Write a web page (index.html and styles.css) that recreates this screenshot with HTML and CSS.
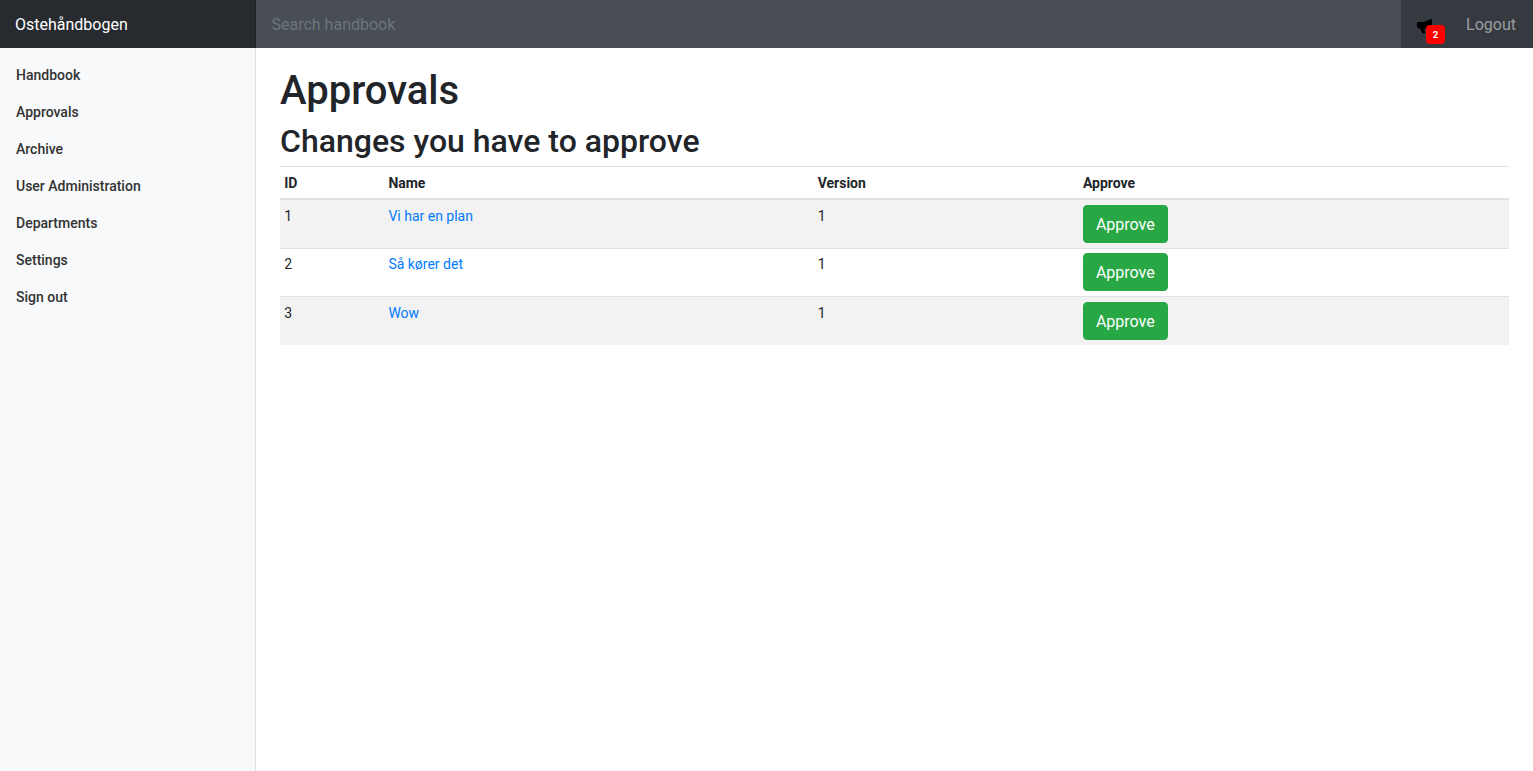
FILE: index.html
```html
<!DOCTYPE html>
<html lang="en">
<head>
<meta charset="utf-8">
<title>Approvals</title>
<link rel="stylesheet" href="styles.css">
</head>
<body>
<header class="navbar">
  <a class="brand" href="#">Ostehåndbogen</a>
  <input class="search" type="text" placeholder="Search handbook">
  <div class="nav-right">
    <span class="bell">
      <svg class="horn" viewBox="0 0 16 16" width="16" height="16" aria-hidden="true"><path d="M0 4.500h1v-.500h6L14 1h1v13L7 10.500l1.500 4.500-3 .5L3 10.500H1v-1H0z" fill="#000"/></svg>
      <span class="badge">2</span>
    </span>
    <a class="logout" href="#">Logout</a>
  </div>
</header>
<div class="shell">
  <nav class="sidebar">
    <a href="#">Handbook</a>
    <a href="#">Approvals</a>
    <a href="#">Archive</a>
    <a href="#">User Administration</a>
    <a href="#">Departments</a>
    <a href="#">Settings</a>
    <a href="#">Sign out</a>
  </nav>
  <main class="main">
    <h1>Approvals</h1>
    <h2>Changes you have to approve</h2>
    <table class="table">
      <colgroup><col class="c1"><col class="c2"><col class="c3"><col></colgroup>
      <thead>
        <tr><th>ID</th><th>Name</th><th>Version</th><th>Approve</th></tr>
      </thead>
      <tbody>
        <tr><td>1</td><td><a href="#">Vi har en plan</a></td><td>1</td><td class="action"><button class="btn">Approve</button></td></tr>
        <tr><td>2</td><td><a href="#">Så kører det</a></td><td>1</td><td class="action"><button class="btn">Approve</button></td></tr>
        <tr><td>3</td><td><a href="#">Wow</a></td><td>1</td><td class="action"><button class="btn">Approve</button></td></tr>
      </tbody>
    </table>
  </main>
</div>
</body>
</html>
```
FILE: styles.css
```css
* { box-sizing: border-box; }
html, body { height: 100%; }
body {
  margin: 0;
  font-family: Roboto, "Liberation Sans", sans-serif;
  font-size: 16px;
  line-height: 1.5;
  color: #212529;
  background: #fff;
  display: flex;
  flex-direction: column;
  overflow: hidden;
}
a { text-decoration: none; }
.navbar {
  display: flex;
  align-items: stretch;
  height: 48px;
  flex: none;
  background: #343a40;
}
.brand {
  width: 256px;
  flex: none;
  padding: 13px 16px 11px 15px;
  color: #fff;
  background: rgba(0, 0, 0, 0.25);
  box-shadow: inset -1px 0 0 rgba(0, 0, 0, 0.25);
}
.search {
  flex: 1;
  min-width: 0;
  border: 0;
  outline: 0;
  padding: 8px 16px 6px 15.500px;
  font: inherit;
  color: #495057;
  background: rgba(255, 255, 255, 0.1);
}
.search::placeholder { color: #6c757d; opacity: 1; }
.nav-right {
  display: flex;
  align-items: center;
  flex: none;
  width: 132px;
  padding-left: 16px;
}
.bell {
  position: relative;
  display: block;
  width: 16px;
  height: 16px;
  margin-top: 4px;
}
.horn { display: block; }
.badge {
  position: absolute;
  left: 9px;
  top: 7px;
  width: 19px;
  height: 19px;
  border-radius: 4px;
  background: #f00;
  color: #fff;
  font-size: 9.600px;
  font-weight: 700;
  line-height: 19px;
  text-align: center;
}
.logout {
  margin-left: auto;
  padding: 2px 17px 0 0;
  color: rgba(255, 255, 255, 0.5);
}
.shell {
  flex: 1;
  display: flex;
  min-height: 0;
}
.sidebar {
  width: 256px;
  flex: none;
  display: flex;
  flex-direction: column;
  padding-top: 8px;
  background: #f8f9fa;
  box-shadow: inset -1px 0 0 rgba(0, 0, 0, 0.1);
}
.sidebar a {
  padding: 9px 16px 7px;
  font-size: 14px;
  font-weight: 500;
  color: #333;
}
.main {
  flex: 1;
  min-width: 0;
  padding: 19px 24px 0;
}
h1, h2 {
  margin: 0;
  font-weight: 500;
  line-height: 1.2;
}
h1 { font-size: 40px; margin-bottom: 7px; }
h2 { font-size: 32px; margin-bottom: 6px; }
.table {
  width: 100%;
  border-collapse: collapse;
  font-size: 14px;
}
.table th, .table td {
  padding: 5.800px 4.800px 3.800px 4.200px;
  text-align: left;
  vertical-align: top;
  border-top: 1px solid #dee2e6;
}
.table thead th {
  vertical-align: bottom;
  border-bottom: 2px solid #dee2e6;
}
.table th:last-child { padding-left: 4.400px; }
.table td.action { padding: 4.800px; }
.c1 { width: 104.200px; }
.c2 { width: 429.300px; }
.c3 { width: 265px; }
.table tbody tr:nth-child(odd) { background: #f2f2f2; }
.table a { color: #007bff; }
.btn {
  display: inline-block;
  padding: 7px 12.400px 5px 11.600px;
  border: 1px solid #28a745;
  border-radius: 4px;
  background: #28a745;
  color: #fff;
  font: inherit;
  font-size: 16px;
  line-height: 1.5;
  vertical-align: middle;
}
```
